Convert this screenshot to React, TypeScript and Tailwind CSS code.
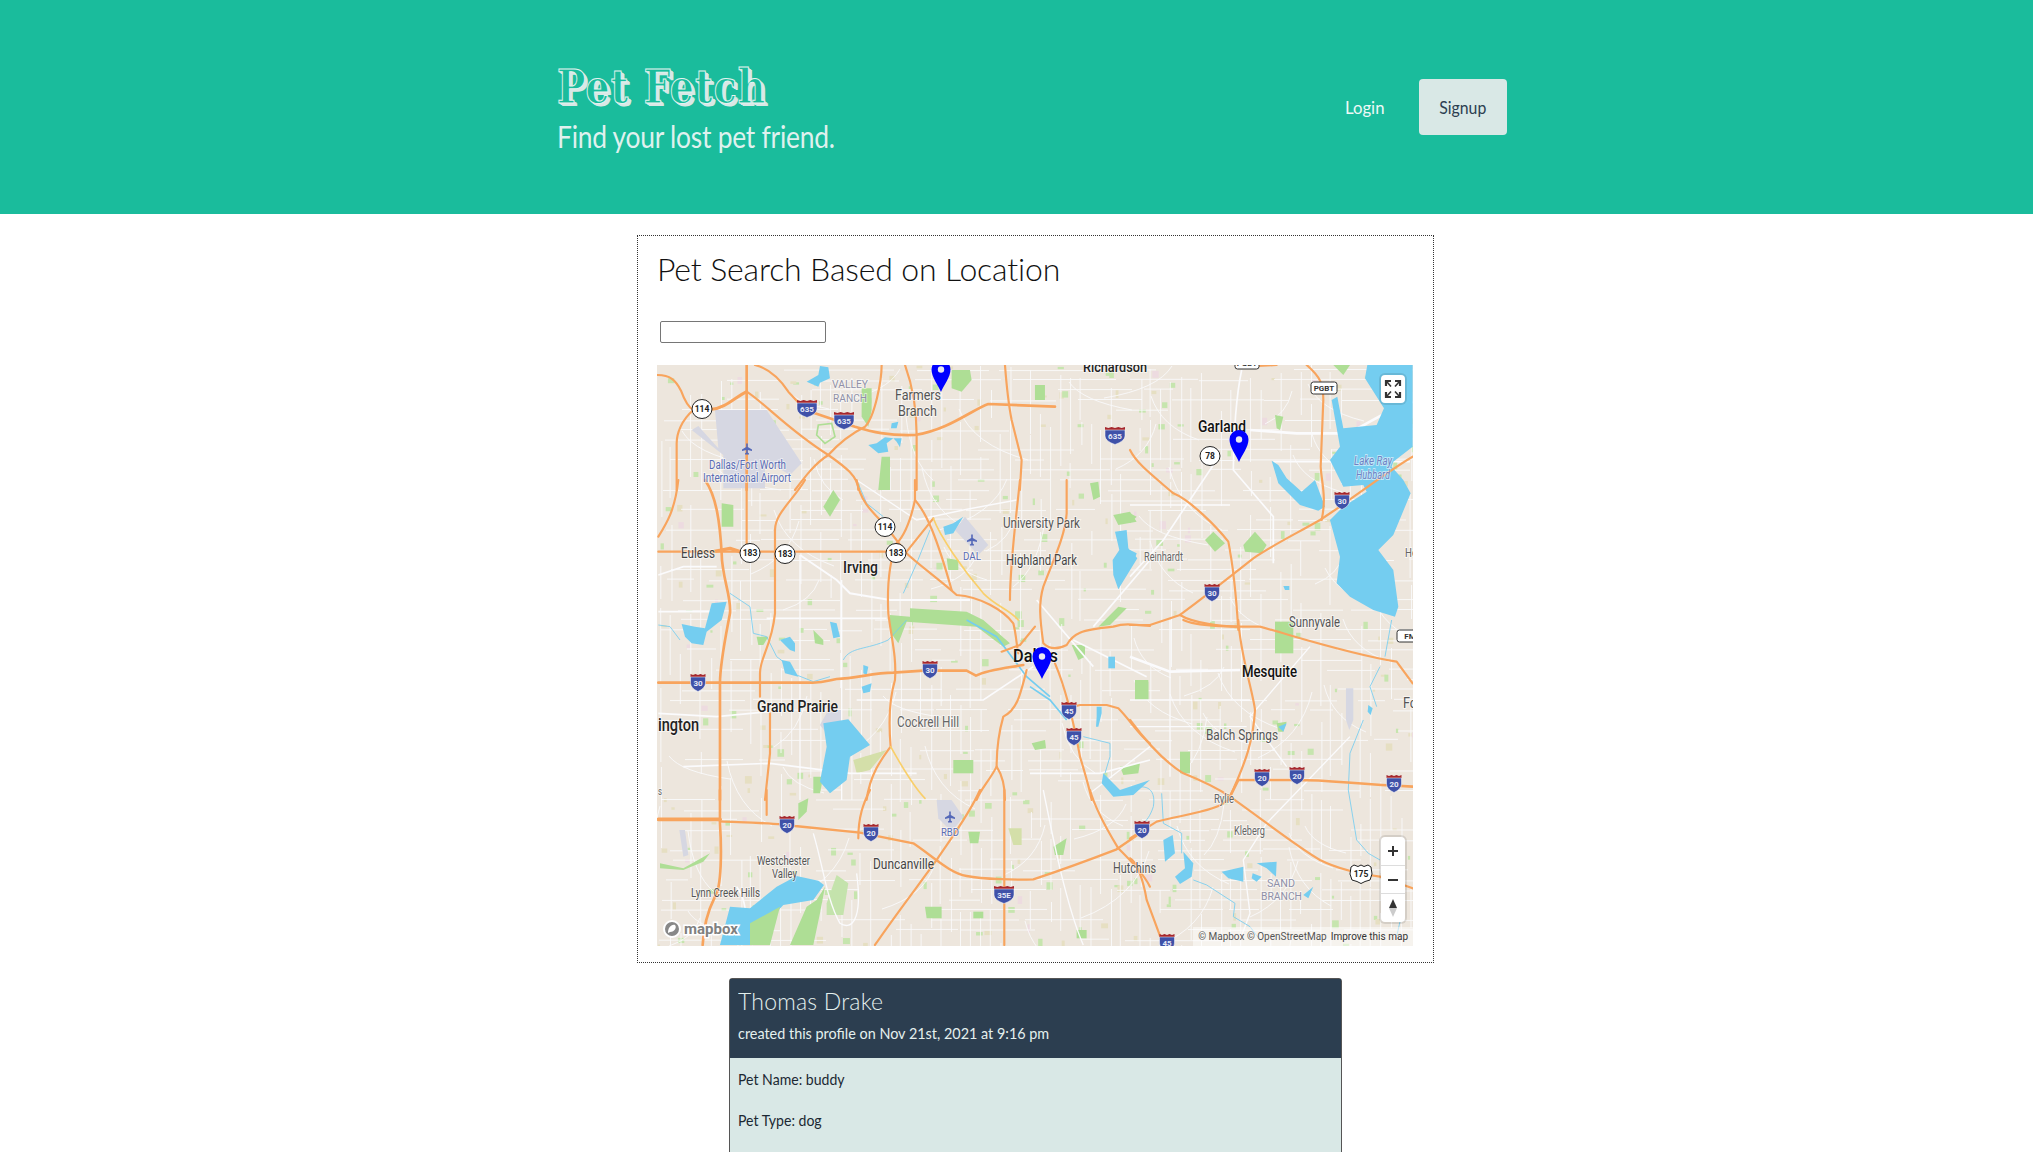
import React from "react";

const UI = '"Lato", "Liberation Sans", sans-serif';
const MAPF = '"Roboto", "Liberation Sans", sans-serif';

function rng(seed: number) {
  let s = seed;
  return () => {
    s = (s * 16807) % 2147483647;
    return s / 2147483647;
  };
}

const r = rng(4242);
const X0 = 657, Y0 = 365, X1 = 1413, Y1 = 946;
const hLines: string[] = [];
const vLines: string[] = [];
const dLines: string[] = [];
for (let y = Y0 + 4; y < Y1; y += 10) {
  let x = X0 + r() * 30;
  while (x < X1) {
    const len = 20 + r() * 90;
    if (r() > 0.42) hLines.push(`M${x.toFixed(0)} ${(y + r() * 2).toFixed(1)}h${len.toFixed(0)}`);
    x += len + r() * 30;
  }
}
for (let x = X0 + 3; x < X1; x += 10) {
  let y = Y0 + r() * 30;
  while (y < Y1) {
    const len = 20 + r() * 80;
    if (r() > 0.42) vLines.push(`M${(x + r() * 2).toFixed(1)} ${y.toFixed(0)}v${len.toFixed(0)}`);
    y += len + r() * 30;
  }
}
for (let i = 0; i < 70; i++) {
  const x = X0 + r() * 756;
  const y = Y0 + r() * 581;
  const dx = (r() > 0.5 ? 1 : -1) * (20 + r() * 50);
  const dy = 20 + r() * 50;
  dLines.push(`M${x.toFixed(0)} ${y.toFixed(0)}q${(dx * 0.2).toFixed(0)} ${(dy * 0.7).toFixed(0)} ${dx.toFixed(0)} ${dy.toFixed(0)}`);
}
const patches: { x: number; y: number; w: number; h: number; c: string }[] = [];
for (let i = 0; i < 340; i++) {
  const t = r();
  patches.push({
    x: X0 + r() * 756,
    y: Y0 + r() * 581,
    w: 2 + r() * 5,
    h: 2 + r() * 6,
    c: t < 0.55 ? "#c6e5ae" : t < 0.92 ? "#e6dfc2" : "#eddbe0",
  });
}

function Z({ x, y, children }: { x: number; y: number; children: React.ReactNode }) {
  return <g transform={`translate(${x} ${y}) scale(0.3333)`}>{children}</g>;
}

function Hw({ d, w = 6.5, c = "#f8a45d" }: { d: string; w?: number; c?: string }) {
  return <path d={d} fill="none" stroke={c} strokeWidth={w} strokeLinecap="round" strokeLinejoin="round" />;
}

function Inter({ x, y, t }: { x: number; y: number; t: string }) {
  const w = t.length > 2 ? 20 : 15;
  const h = w / 2;
  return (
    <g transform={`translate(${x} ${y})`}>
      <path d={`M${-h} -5V-8l${h / 3} 1l${h / 3} -1l${h / 3} 1l${h / 3} -1l${h / 3} 1l${h / 3} -1V-5Z`} fill="#a5262c" />
      <path d={`M${-h} -5H${h}V1Q${h} 6 0 9.5Q${-h} 6 ${-h} 1Z`} fill="#3f51a8" stroke="#fff" strokeWidth="0.5" />
      <text x="0" y="4" textAnchor="middle" fontSize="8" fontWeight="700" fill="#e6e9f7" fontFamily={MAPF}>{t}</text>
    </g>
  );
}

function Us({ x, y, t }: { x: number; y: number; t: string }) {
  return (
    <g transform={`translate(${x} ${y})`}>
      <ellipse rx="10" ry="9.5" fill="#fff" stroke="#222" strokeWidth="1" />
      <text x="0" y="3.2" textAnchor="middle" fontSize="8.5" fontWeight="700" fill="#222" fontFamily={MAPF}>{t}</text>
    </g>
  );
}

function UsShield({ x, y, t }: { x: number; y: number; t: string }) {
  return (
    <g transform={`translate(${x} ${y})`}>
      <path d="M-10 -7L-7 -9L-3 -7.5L0 -9L3 -7.5L7 -9L10 -7L11 0L9 6L4 7.5L0 9.5L-4 7.5L-9 6L-11 0Z" fill="#fff" stroke="#222" strokeWidth="1" />
      <text x="0" y="3.2" textAnchor="middle" fontSize="8.5" fontWeight="700" fill="#222" fontFamily={MAPF}>{t}</text>
    </g>
  );
}

function Box({ x, y, w, t, h = 12 }: { x: number; y: number; w: number; t: string; h?: number }) {
  return (
    <g>
      <rect x={x - w / 2} y={y - h / 2} width={w} height={h} rx="2.5" fill="#fff" stroke="#333" strokeWidth="1" />
      <text x={x} y={y + 3} textAnchor="middle" fontSize="8" fontWeight="700" fill="#333" fontFamily={MAPF}>{t}</text>
    </g>
  );
}

function Pin({ x, top }: { x: number; top: number }) {
  return (
    <g transform={`translate(${x} ${top})`}>
      <path d="M0 32C-3 25 -9.5 17 -9.5 9.5A9.5 9.5 0 0 1 9.5 9.5C9.5 17 3 25 0 32Z" fill="#0000ff" />
      <circle cx="0" cy="9.5" r="3.2" fill="#e8e8f0" />
    </g>
  );
}

function Plane({ x, y }: { x: number; y: number }) {
  return (
    <path
      transform={`translate(${x} ${y})`}
      d="M-0.8 -5.5H0.8V-2L5 0.5V2L0.8 1V3.6L2 4.6V5.5H-2V4.6L-0.8 3.6V1L-5 2V0.5L-0.8 -2Z"
      fill="#5468b8"
    />
  );
}

type L = [string, number, number, number, number, string, number?, string?];
const labels: L[] = [
  ["Richardson", 1083, 372, 64, 15, "#222", 500],
  ["Farmers", 895, 400, 46, 15, "#555"],
  ["Branch", 898, 416, 39, 15, "#555"],
  ["VALLEY", 832, 388, 36, 11.5, "#8f90a8"],
  ["RANCH", 833, 402, 34, 11.5, "#8f90a8"],
  ["Dallas/Fort Worth", 709, 469, 77, 12, "#5a6cb4"],
  ["International Airport", 703, 482, 88, 12, "#5a6cb4"],
  ["Garland", 1198, 432, 48, 16, "#111", 500],
  ["University Park", 1003, 528, 77, 14, "#555"],
  ["Highland Park", 1006, 565, 71, 14, "#444"],
  ["DAL", 963, 560, 18, 11.5, "#5a6cb4"],
  ["Euless", 681, 558, 34, 14, "#444"],
  ["Irving", 843, 573, 35, 16, "#222", 500],
  ["Reinhardt", 1144, 561, 39, 12, "#666"],
  ["Sunnyvale", 1289, 627, 51, 14, "#555"],
  ["Dallas", 1013, 662, 45, 18, "#111", 500],
  ["Mesquite", 1242, 677, 55, 17, "#111", 500],
  ["ington", 658, 731, 41, 18, "#222", 500],
  ["Grand Prairie", 757, 712, 81, 16, "#222", 500],
  ["Cockrell Hill", 897, 727, 62, 14, "#666"],
  ["Balch Springs", 1206, 740, 72, 15, "#555"],
  ["Rylie", 1214, 803, 20, 12, "#666"],
  ["Kleberg", 1234, 835, 31, 12, "#666"],
  ["SAND", 1267, 887, 28, 11.5, "#8f90a8"],
  ["BRANCH", 1261, 900, 41, 11.5, "#8f90a8"],
  ["Hutchins", 1113, 873, 43, 14, "#555"],
  ["Westchester", 757, 865, 53, 13, "#555"],
  ["Valley", 772, 878, 25, 13, "#555"],
  ["Duncanville", 873, 869, 61, 15, "#444"],
  ["Lynn Creek Hills", 691, 897, 69, 13, "#555"],
  ["RBD", 941, 836, 18, 11.5, "#5a6cb4"],
  ["Fo", 1403, 708, 14, 15, "#555"],
  ["Lake Ray", 1354, 465, 38, 12, "#6f82c4", 400, "italic"],
  ["Hubbard", 1356, 479, 34, 12, "#6f82c4", 400, "italic"],
  ["He", 1405, 557, 12, 12, "#666"],
  ["s", 658, 795, 4, 11, "#666"],
];

function MapDrawing() {
  return (
    <svg viewBox="657 365 756 581" width="756" height="581" className="block">
      <rect x="657" y="365" width="756" height="581" fill="#ede6dd" />
      {patches.map((p, i) => (
        <rect key={i} x={p.x} y={p.y} width={p.w} height={p.h} fill={p.c} />
      ))}
      <path d={hLines.join("")} stroke="#f9f9fb" strokeWidth="0.9" fill="none" />
      <path d={vLines.join("")} stroke="#f9f9fb" strokeWidth="0.9" fill="none" />
      <path d={dLines.join("")} stroke="#f9f9fb" strokeWidth="0.9" fill="none" />

      {/* airports */}
      <Z x={655} y={360}>
        <path d="M180 150H335L440 310L405 345L330 300V385H205V285L110 210L130 198L190 265Z" fill="#d6d7e2" />
      </Z>
      <Z x={650} y={480}>
        <path d="M915 150L945 110L1015 195L985 225Z" fill="#d6d7e2" />
        <path d="M510 735L535 690H575V725L545 780Z" fill="#d6d7e2" />
      </Z>
      <Z x={650} y={790}>
        <path d="M860 30H905L940 80L905 125L865 85Z" fill="#d6d7e2" />
        <path d="M88 120L105 120L115 195L100 200Z" fill="#d6d7e2" />
      </Z>
      <Z x={1130} y={620}>
        <path d="M648 205H670V300L658 330L648 300Z" fill="#d6d7e2" />
      </Z>

      {/* parks */}
      <g fill="#aede95">
        <Z x={655} y={360}>
          <path d="M620 85H650V150L640 200L620 170Z" />
          <path d="M680 290H705V390H670Z" />
          <path d="M890 30H945L950 60L920 95L890 85Z" />
          <path d="M1140 75H1170V120H1140Z" />
          <path d="M490 195L530 190L540 230L510 250L485 225Z" fill="none" stroke="#aede95" strokeWidth="5" />
        </Z>
        <Z x={650} y={480}>
          <path d="M215 70L250 75V140H215Z" />
          <path d="M780 385L950 395L1000 420L1080 490L1060 500L980 440L770 425L745 490L720 455L720 405L780 410Z" />
          <path d="M490 450L520 480V495L495 490Z" />
          <path d="M320 470H355L340 495H325Z" />
          <path d="M610 840L710 810L660 870L620 880Z" fill="#d4dfa9" />
          <path d="M490 890H520L510 940H490Z" />
          <path d="M550 30L570 60L540 110L520 80Z" />
          <path d="M890 235L925 240L925 270H895Z" />
          <path d="M910 840H970V880H910Z" />
        </Z>
        <Z x={1030} y={480}>
          <path d="M205 440L265 380L290 385L240 435Z" />
          <path d="M125 495H165V530L145 540Z" />
          <path d="M5 790L45 780L48 805L15 810Z" />
          <path d="M315 600H355V660H315Z" />
          <path d="M270 860L330 850L325 880L280 885Z" />
          <path d="M250 105L300 95L320 125L265 135Z" />
          <path d="M180 10L205 5L210 50L190 60Z" />
        </Z>
        <Z x={1130} y={350}>
          <path d="M225 570L250 545L285 580L255 605Z" />
          <path d="M340 585L375 545L410 585L395 610L345 605Z" />
          <path d="M435 195L460 200L450 240L440 235Z" />
          <path d="M610 45L660 45L640 75Z" />
          <path d="M0 490L20 500L0 520Z" />
        </Z>
        <Z x={1130} y={620}>
          <path d="M435 5H490V100H435Z" />
          <path d="M150 395H180V460H150Z" />
          <path d="M15 185H55V240H15Z" />
          <path d="M440 310L470 305L460 335L445 335Z" />
        </Z>
        <Z x={650} y={790}>
          <path d="M445 40L475 25L470 65L445 90Z" />
          <path d="M955 125H990L985 160H960Z" />
          <path d="M825 350H875V385H830Z" />
          <path d="M1075 115H1115V165H1090Z" fill="#d4dfa9" />
          <path d="M1210 170L1250 145L1240 195L1215 195Z" />
          <path d="M1280 420H1310V445H1280Z" />
          <path d="M970 365H1000V385H970Z" />
          <path d="M30 220L100 235L180 190L160 215L100 240L30 235Z" />
          <path d="M530 340L560 255L595 280L580 375H530Z" fill="#c4e3ac" />
        </Z>
      </g>

      {/* major white roads */}
      <g fill="none" stroke="#fbfbfd">
        <Z x={1130} y={350}>
          <path d="M360 240L500 250H640C680 250 740 190 848 155" strokeWidth="8" />
          <path d="M335 60C320 130 310 250 310 360L430 500V640" strokeWidth="5" />
          <path d="M430 335H840" strokeWidth="5" />
          <path d="M0 465H300M260 330L100 570L0 680" strokeWidth="5" />
        </Z>
        <Z x={650} y={480}>
          <path d="M450 225L560 300L600 340L720 360H960" strokeWidth="6" />
          <path d="M25 285L100 260H200M25 395H200M350 415H710" strokeWidth="5" />
          <path d="M360 695L200 710L25 700M620 660H1000L1150 560" strokeWidth="5" />
          <path d="M100 860L360 850L600 880H800" strokeWidth="5" />
          <path d="M450 225V960M575 300V960" strokeWidth="4" />
          <path d="M620 0L800 120L940 90L1100 60" strokeWidth="4" />
        </Z>
        <Z x={1030} y={480}>
          <path d="M130 480L350 590M190 440L360 240M20 360L190 560" strokeWidth="5" />
          <path d="M0 880L210 880L360 840" strokeWidth="5" />
          <path d="M180 940L360 800" strokeWidth="4" />
        </Z>
        <Z x={1130} y={620}>
          <path d="M0 110L120 155L330 150" strokeWidth="8" />
          <path d="M120 0V470M0 240H360M0 320H350" strokeWidth="4" />
          <path d="M540 80L360 290L470 440M660 350L410 610L340 720L360 880L330 960" strokeWidth="4" />
        </Z>
        <Z x={650} y={790}>
          <path d="M490 130C520 230 530 330 570 400C600 420 640 400 620 250" strokeWidth="4" />
          <path d="M1180 0C1210 150 1250 350 1300 465" strokeWidth="4" />
          <path d="M260 290C300 340 280 420 310 465" strokeWidth="5" />
        </Z>
      </g>

      {/* water */}
      <g fill="#74cdf0">
        <Z x={655} y={360}>
          <path d="M455 65L490 45L495 18L520 22L525 55L495 68L490 80Z" />
          <path d="M640 255L665 250L690 232L715 235L695 250L700 275L670 280Z" />
          <path d="M710 190L730 185L725 205L708 205Z" />
          <path d="M715 235H740L735 262L725 245Z" />
        </Z>
        <Z x={650} y={480}>
          <path d="M95 432L135 440L165 445L185 370L230 365L215 420L170 455L160 495L125 490L105 470Z" />
          <path d="M520 730L595 718L660 795L600 830L590 900L540 940L510 905L530 800Z" />
          <path d="M540 425L560 430L570 470L550 475Z" />
          <path d="M395 540L420 545L445 590L405 580Z" />
          <path d="M635 620L665 610L660 635L640 640Z" />
          <path d="M880 140L910 130L940 110L910 160L885 165Z" />
          <path d="M390 480L420 470L435 490L435 515L420 510L410 500Z" />
          <path d="M640 555L655 560L650 585L640 580Z" />
        </Z>
        <Z x={1030} y={480}>
          <path d="M255 155L290 150L295 205L322 235L265 328L250 285L248 240L268 210Z" />
          <path d="M235 530H255V565H235Z" />
          <path d="M200 680H215L215 700L205 740H198L200 710Z" />
          <path d="M220 880L270 930L360 900L310 945L250 950L215 910Z" />
        </Z>
        <Z x={1130} y={350}>
          <path d="M712 45H848V290L790 335L785 350L820 390L842 430L790 555L745 600L790 660L805 770L795 800L730 780L660 740L620 700L630 620L600 510L640 470L710 425L700 405L640 410L600 330L630 290L605 150L622 140L640 235L740 225L762 175L705 85Z" />
          <path d="M425 332L445 345L470 385L515 425L555 390L585 470L565 482L510 465L445 400Z" />
          <path d="M0 600L20 610L10 640L0 640Z" />
          <path d="M460 708H478V720H465Z" />
        </Z>
        <Z x={1130} y={620}>
          <path d="M100 660L128 645L135 700L105 725Z" />
          <path d="M135 770L165 745L160 695L190 730L185 770L150 792Z" />
          <path d="M275 755L340 740L340 785L295 775Z" />
          <path d="M368 760L395 770L380 785L365 775Z" />
          <path d="M380 730L440 725L438 770L410 745Z" />
          <path d="M520 825L550 800L535 835Z" />
          <path d="M715 255L728 265L722 285L713 275Z" />
          <path d="M445 320L470 310L460 335Z" />
        </Z>
        <Z x={650} y={790}>
          <path d="M210 465L240 350L300 355L380 290L440 258L505 272L522 285L490 330L400 345L330 420L300 465Z" />
          <path d="M300 400L390 350L360 465H300Z" fill="#aede95" />
          <path d="M420 465L470 350L500 330L525 290L510 370L490 465Z" fill="#aede95" />
        </Z>
      </g>

      {/* creeks */}
      <g fill="none" stroke="#74cdf0" strokeWidth="2.5">
        <Z x={650} y={480}>
          <path d="M240 340L300 380L310 460L350 470L380 530L400 545" />
          <path d="M25 435L60 440L90 480" />
          <path d="M440 585L490 605L540 590M580 540C600 500 650 510 715 480L770 420" />
          <path d="M620 0L650 70L700 110M840 150L800 250L760 340" />
          <path d="M950 420L1040 470L1130 590L1200 650" strokeWidth="5" />
        </Z>
        <Z x={1130} y={620}>
          <path d="M0 510C40 490 80 500 70 560C60 590 50 600 40 610M95 520L100 610L155 640V700" />
          <path d="M190 780L230 795L315 850L310 890L360 920L390 960" />
          <path d="M785 0L765 110M750 140L720 200L740 260M700 300L660 400L655 510L680 660L715 700L750 720M810 905L800 950" />
        </Z>
        <Z x={1030} y={480}>
          <path d="M160 770L240 790L240 830L225 880" />
          <path d="M0 620L60 660L110 720" strokeWidth="5" />
        </Z>
      </g>

      {/* highways */}
      <Z x={655} y={360}>
        <Hw d="M8 45C45 45 62 60 78 92C90 125 100 142 115 150" />
        <Hw d="M170 148C210 145 240 112 275 95" w={9} />
        <Hw d="M275 15V390" w={8} />
        <Hw d="M300 15C340 25 370 50 400 95L432 130" />
        <Hw d="M275 95C330 130 400 210 520 285C570 320 610 350 610 390" />
        <Hw d="M420 390C450 350 480 310 520 285C560 240 600 215 630 200C660 170 680 60 680 15" />
        <Hw d="M480 160L600 200C650 215 700 228 780 225C880 210 950 150 1000 132L1200 140" w={8} />
        <Hw d="M115 150C80 180 65 220 65 250V390" />
        <Hw d="M750 15C770 70 785 150 785 225V390" />
        <Hw d="M1050 15C1055 80 1060 130 1070 180L1100 300L1095 390" />
      </Z>
      <Z x={650} y={480}>
        <Hw d="M25 170C50 130 75 90 85 0" />
        <Hw d="M165 0C200 50 210 130 215 220C215 290 245 350 240 400C225 480 210 550 210 610V960" w={8} />
        <Hw d="M25 215H720" />
        <Hw d="M190 215L240 205L270 215" w={10} />
        <Hw d="M290 0V215" />
        <Hw d="M465 0C430 60 375 100 375 150V400C365 500 330 530 330 580V650" />
        <Hw d="M360 700V820L345 960" />
        <Hw d="M620 0C630 60 660 90 705 135L770 220C800 250 870 300 920 345C990 350 1060 390 1090 430C1100 470 1100 500 1105 520" />
        <Hw d="M795 0V60C780 130 760 170 740 190C720 240 710 300 715 400C725 480 740 530 735 600C720 650 715 720 722 800C700 830 660 880 650 960" />
        <Hw d="M722 800C750 850 790 920 825 955" c="#f9cf6a" w={5} />
        <Hw d="M795 60C830 100 860 170 905 330" />
        <Hw d="M770 215L850 115" />
        <Hw d="M850 115C870 170 940 270 1000 340C1040 380 1080 390 1105 420" c="#f9cf6a" w={5} />
        <Hw d="M25 608H480C520 610 540 600 560 597C620 595 670 578 730 578L820 572H950L978 587C1010 570 1060 565 1120 555" w={8} />
        <Hw d="M1110 0C1100 100 1080 250 1080 360" />
        <Hw d="M1130 570C1110 650 1100 690 1060 710C1040 780 1040 830 1040 860C1020 900 990 930 980 960" />
        <Hw d="M1040 860C1060 890 1065 930 1065 960" />
        <Hw d="M1055 515L1110 495L1155 440" />
      </Z>
      <Z x={1030} y={480}>
        <Hw d="M110 0V100C105 170 70 240 40 320C25 370 30 420 40 490C50 500 70 515 110 495C130 460 150 450 250 440C280 430 300 432 360 438" />
        <Hw d="M75 550C105 620 130 720 150 830C165 880 180 930 185 960" />
        <Hw d="M130 680L150 675H230L265 685C300 720 330 770 360 790" />
      </Z>
      <Z x={1130} y={350}>
        <Hw d="M530 45C570 80 580 100 580 150L572 350C575 400 590 440 575 510" />
        <Hw d="M385 48L440 45" />
        <Hw d="M0 300C20 340 60 370 130 430C180 450 260 530 295 575C310 650 320 760 325 840" />
        <Hw d="M848 320C780 360 700 420 630 470L570 510C500 550 420 590 370 625C300 680 250 720 150 795L60 825L0 825" />
        <Hw d="M150 795C190 820 280 830 320 830" />
      </Z>
      <Z x={1130} y={620}>
        <Hw d="M160 0C200 20 300 20 390 20C500 50 650 100 800 125L848 190" />
        <Hw d="M325 0C330 100 370 220 375 270C370 360 350 420 300 530" />
        <Hw d="M0 300C60 380 110 430 160 460C210 480 270 510 300 530C400 600 500 680 570 720C620 745 680 760 750 770L848 805" />
        <Hw d="M300 530C280 570 180 580 80 605L0 655" />
        <Hw d="M300 530L325 480H500C600 480 650 490 848 500" w={8} />
        <Hw d="M0 715C20 725 40 780 50 840L100 975" />
      </Z>
      <Z x={650} y={790}>
        <Hw d="M25 88H210" w={11} />
        <Hw d="M210 94C300 98 390 100 435 108L630 128L790 160C850 200 900 250 950 258C1000 268 1100 270 1150 268C1250 235 1330 205 1400 178L1470 130" w={7} />
        <Hw d="M210 0V100C215 180 215 290 195 320C170 370 160 420 158 465" w={8} />
        <Hw d="M350 0V75" />
        <Hw d="M660 0C640 40 625 80 625 145" />
        <Hw d="M990 0C960 70 900 150 860 210C810 280 740 370 675 465" />
        <Hw d="M1063 0V465" />
        <Hw d="M1320 0C1340 70 1390 150 1405 175C1440 210 1480 250 1500 290" />
      </Z>

      <Plane x={747} y={449} />
      <Plane x={972} y={540} />
      <Plane x={950} y={817} />

      {[
        [807, 408, "635"], [844, 420, "635"], [1115, 435, "635"],
        [1342, 500, "30"], [1212, 592, "30"], [698, 682, "30"], [930, 669, "30"],
        [1069, 710, "45"], [1074, 736, "45"], [1167, 942, "45"],
        [1262, 777, "20"], [1297, 775, "20"], [1394, 783, "20"], [1142, 829, "20"],
        [787, 824, "20"], [871, 832, "20"], [1004, 894, "35E"],
      ].map(([x, y, t], i) => (
        <Inter key={i} x={x as number} y={y as number} t={t as string} />
      ))}
      {[
        [702, 409, "114"], [885, 527, "114"], [750, 553, "183"], [785, 554, "183"],
        [896, 553, "183"], [1210, 456, "78"],
      ].map(([x, y, t], i) => (
        <Us key={i} x={x as number} y={y as number} t={t as string} />
      ))}
      <UsShield x={1361} y={874} t="175" />
      <Box x={1324} y={388} w={26} t="PGBT" />
      <Box x={1247} y={363} w={24} t="PGBT" />
      <Box x={1410} y={636} w={26} t="FM" />

      {labels.map(([t, x, y, w, s, c, fw, st], i) => (
        <text
          key={i}
          x={x}
          y={y}
          textLength={w}
          lengthAdjust="spacingAndGlyphs"
          fontSize={s}
          fill={c}
          fontWeight={fw ?? 400}
          fontStyle={st ?? "normal"}
          fontFamily={MAPF}
          stroke="rgba(255,255,255,0.55)"
          strokeWidth="2"
          paintOrder="stroke"
        >
          {t}
        </text>
      ))}

      <Pin x={941} top={360} />
      <Pin x={1239} top={430} />
      <Pin x={1042} top={647} />
    </svg>
  );
}

function MapBox() {
  return (
    <div className="relative w-[756px] h-[581px] overflow-hidden">
      <MapDrawing />
      <button className="absolute left-[724px] top-[10px] w-[24px] h-[28px] bg-white rounded-[4px] flex items-center justify-center shadow-[0_0_0_2px_rgba(0,0,0,0.1)]">
        <svg width="18" height="20" viewBox="0 0 18 20" fill="none" stroke="#333" strokeWidth="2.2">
          <path d="M2 7V2H7M16 7V2H11M2 13V18H7M16 13V18H11" />
          <path d="M3 3L7 7.5M15 3L11 7.5M3 17L7 12.5M15 17L11 12.5" strokeWidth="1.6" />
        </svg>
      </button>
      <div className="absolute left-[724px] top-[472px] w-[24px] h-[85px] bg-white rounded-[4px] flex flex-col shadow-[0_0_0_2px_rgba(0,0,0,0.1)]">
        <div className="h-[29px] flex items-center justify-center border-b border-[#ddd]">
          <svg width="12" height="12" viewBox="0 0 12 12"><path d="M5 1H7V5H11V7H7V11H5V7H1V5H5Z" fill="#333" /></svg>
        </div>
        <div className="h-[28px] flex items-center justify-center border-b border-[#ddd]">
          <svg width="12" height="12" viewBox="0 0 12 12"><path d="M1 5H11V7H1Z" fill="#333" /></svg>
        </div>
        <div className="h-[28px] flex items-center justify-center">
          <svg width="10" height="20" viewBox="0 0 10 20"><path d="M5 1L9 10H1Z" fill="#333" /><path d="M5 19L9 10H1Z" fill="#ccc" /></svg>
        </div>
      </div>
      <div className="absolute right-0 bottom-0 h-[19px] px-[5px] bg-[rgba(255,255,255,0.5)] flex items-center gap-[4px] text-[10px] text-[#333] whitespace-nowrap" style={{ fontFamily: MAPF }}>
        <span className="text-[#555]">© Mapbox © OpenStreetMap</span>
        <span>Improve this map</span>
      </div>
      <div className="absolute left-[5px] bottom-[7px] flex items-center gap-[2px]">
        <svg width="20" height="20" viewBox="0 0 20 20">
          <circle cx="10" cy="10" r="8" fill="#888" stroke="#fff" strokeWidth="2" />
          <path d="M6 14C6 9 9 5 13 6C15 8 13 13 8 13" fill="#fff" />
        </svg>
        <span className="text-[15px] font-bold text-[#808080] [-webkit-text-stroke:3px_#fff] [paint-order:stroke_fill] leading-none" style={{ fontFamily: MAPF }}>mapbox</span>
      </div>
    </div>
  );
}

export default function App() {
  return (
    <div className="h-[1152px] overflow-hidden bg-white" style={{ fontFamily: UI }}>
      <header className="h-[214px] bg-[#1abc9c] pl-[557px] pr-[526px] flex items-center justify-between">
        <div className="pt-[3px] w-[400px]">
          <h1
            className="origin-left scale-x-[0.82] text-[46px] leading-[50px] font-bold tracking-[1.5px] text-[#1abc9c] [-webkit-text-stroke:1px_#e4f3f0] [text-shadow:1px_1px_0_#d9e8e6,2px_2px_0_#d9e8e6,3px_2px_0_#d9e8e6,4px_3px_0_#d9e8e6]"
            style={{ fontFamily: '"DejaVu Serif", serif' }}
          >
            Pet Fetch
          </h1>
          <p className="origin-left scale-x-[0.852] text-[31px] leading-[40px] mt-[4px] text-[#dff1ee] font-normal tracking-[-0.3px] whitespace-nowrap">Find your lost pet friend.</p>
        </div>
        <nav className="flex items-center gap-[35px]">
          <a className="origin-right scale-x-[0.93] text-[18px] text-[#eef9f7]">Login</a>
          <a className="w-[88px] h-[56px] rounded-[4px] bg-[#d9e8e6] text-[#2c3e50] text-[18px] flex items-center justify-center">
            <span className="scale-x-[0.88]">Signup</span>
          </a>
        </nav>
      </header>

      <main>
        <section className="ml-[637px] mt-[21px] w-[797px] h-[728px] border border-dotted border-[#333] px-[19px] pt-[13px]">
          <h2 className="text-[32px] leading-[40px] font-light tracking-[-0.15px] text-[#111]">Pet Search Based on Location</h2>
          <input className="block ml-[3px] mt-[32px] w-[166px] h-[22px] border border-[#767676] rounded-[2px] bg-white" />
          <div className="mt-[22px]">
            <MapBox />
          </div>
        </section>

        <article className="ml-[729px] mt-[15px] w-[613px] h-[300px] border border-[#555] rounded-t-[3px] bg-[#d9e8e6]">
          <div className="h-[79px] bg-[#2c3e50] px-[8px] pt-[7px] text-[#e4f0ee]">
            <h3 className="origin-left scale-x-[0.96] text-[24px] leading-[30px] font-light tracking-[0.2px]">Thomas Drake</h3>
            <p className="origin-left scale-x-[0.9] text-[16px] leading-[22px] mt-[6px] whitespace-nowrap">created this profile on Nov 21st, 2021 at 9:16 pm</p>
          </div>
          <div className="px-[8px] pt-[10px] text-[16px] text-[#1c2833]">
            <p className="origin-left scale-x-[0.88] leading-[22px]">Pet Name: buddy</p>
            <p className="origin-left scale-x-[0.88] leading-[22px] mt-[19px]">Pet Type: dog</p>
          </div>
        </article>
      </main>
    </div>
  );
}
